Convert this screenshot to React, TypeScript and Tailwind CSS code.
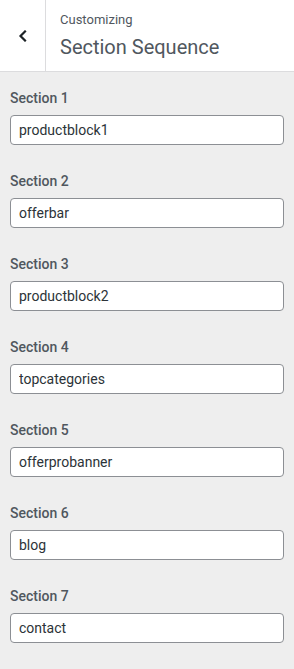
const sections = [
  'productblock1',
  'offerbar',
  'productblock2',
  'topcategories',
  'offerprobanner',
  'blog',
  'contact',
]

export default function App() {
  return (
    <div
      className="w-[294px] min-h-[669px] bg-[#eeeeee] text-[#50575e]"
      style={{ fontFamily: 'Roboto, "Noto Sans", sans-serif' }}
    >
      <div className="flex h-[72px] bg-white border-b border-[#dcdcde]">
        <button className="w-[46px] shrink-0 flex items-center justify-center border-r border-[#dcdcde] text-[#1d2327]">
          <svg width="12" height="12" viewBox="0 0 12 12" fill="none">
            <path d="M8 1.5 L3.5 6 L8 10.5" stroke="currentColor" strokeWidth="2.2" strokeLinecap="square" />
          </svg>
        </button>
        <div className="flex flex-col pl-[14px] pt-[11px]">
          <span className="text-[13px] leading-[18px] text-[#50575e]">Customizing</span>
          <span className="text-[20px] leading-[28px] mt-[4px] text-[#50575e]">Section Sequence</span>
        </div>
      </div>
      <div className="px-[10px] pt-[16px] flex flex-col gap-[26px]">
        {sections.map((value, i) => (
          <div key={i}>
            <label className="block text-[14px] leading-5 font-medium text-[#50575e] mb-[7px]">
              Section {i + 1}
            </label>
            <input
              type="text"
              defaultValue={value}
              className="w-full h-[30px] px-[8px] bg-white border border-[#8c8f94] rounded-[4px] text-[14px] text-[#2c3338] outline-none"
            />
          </div>
        ))}
      </div>
    </div>
  )
}
